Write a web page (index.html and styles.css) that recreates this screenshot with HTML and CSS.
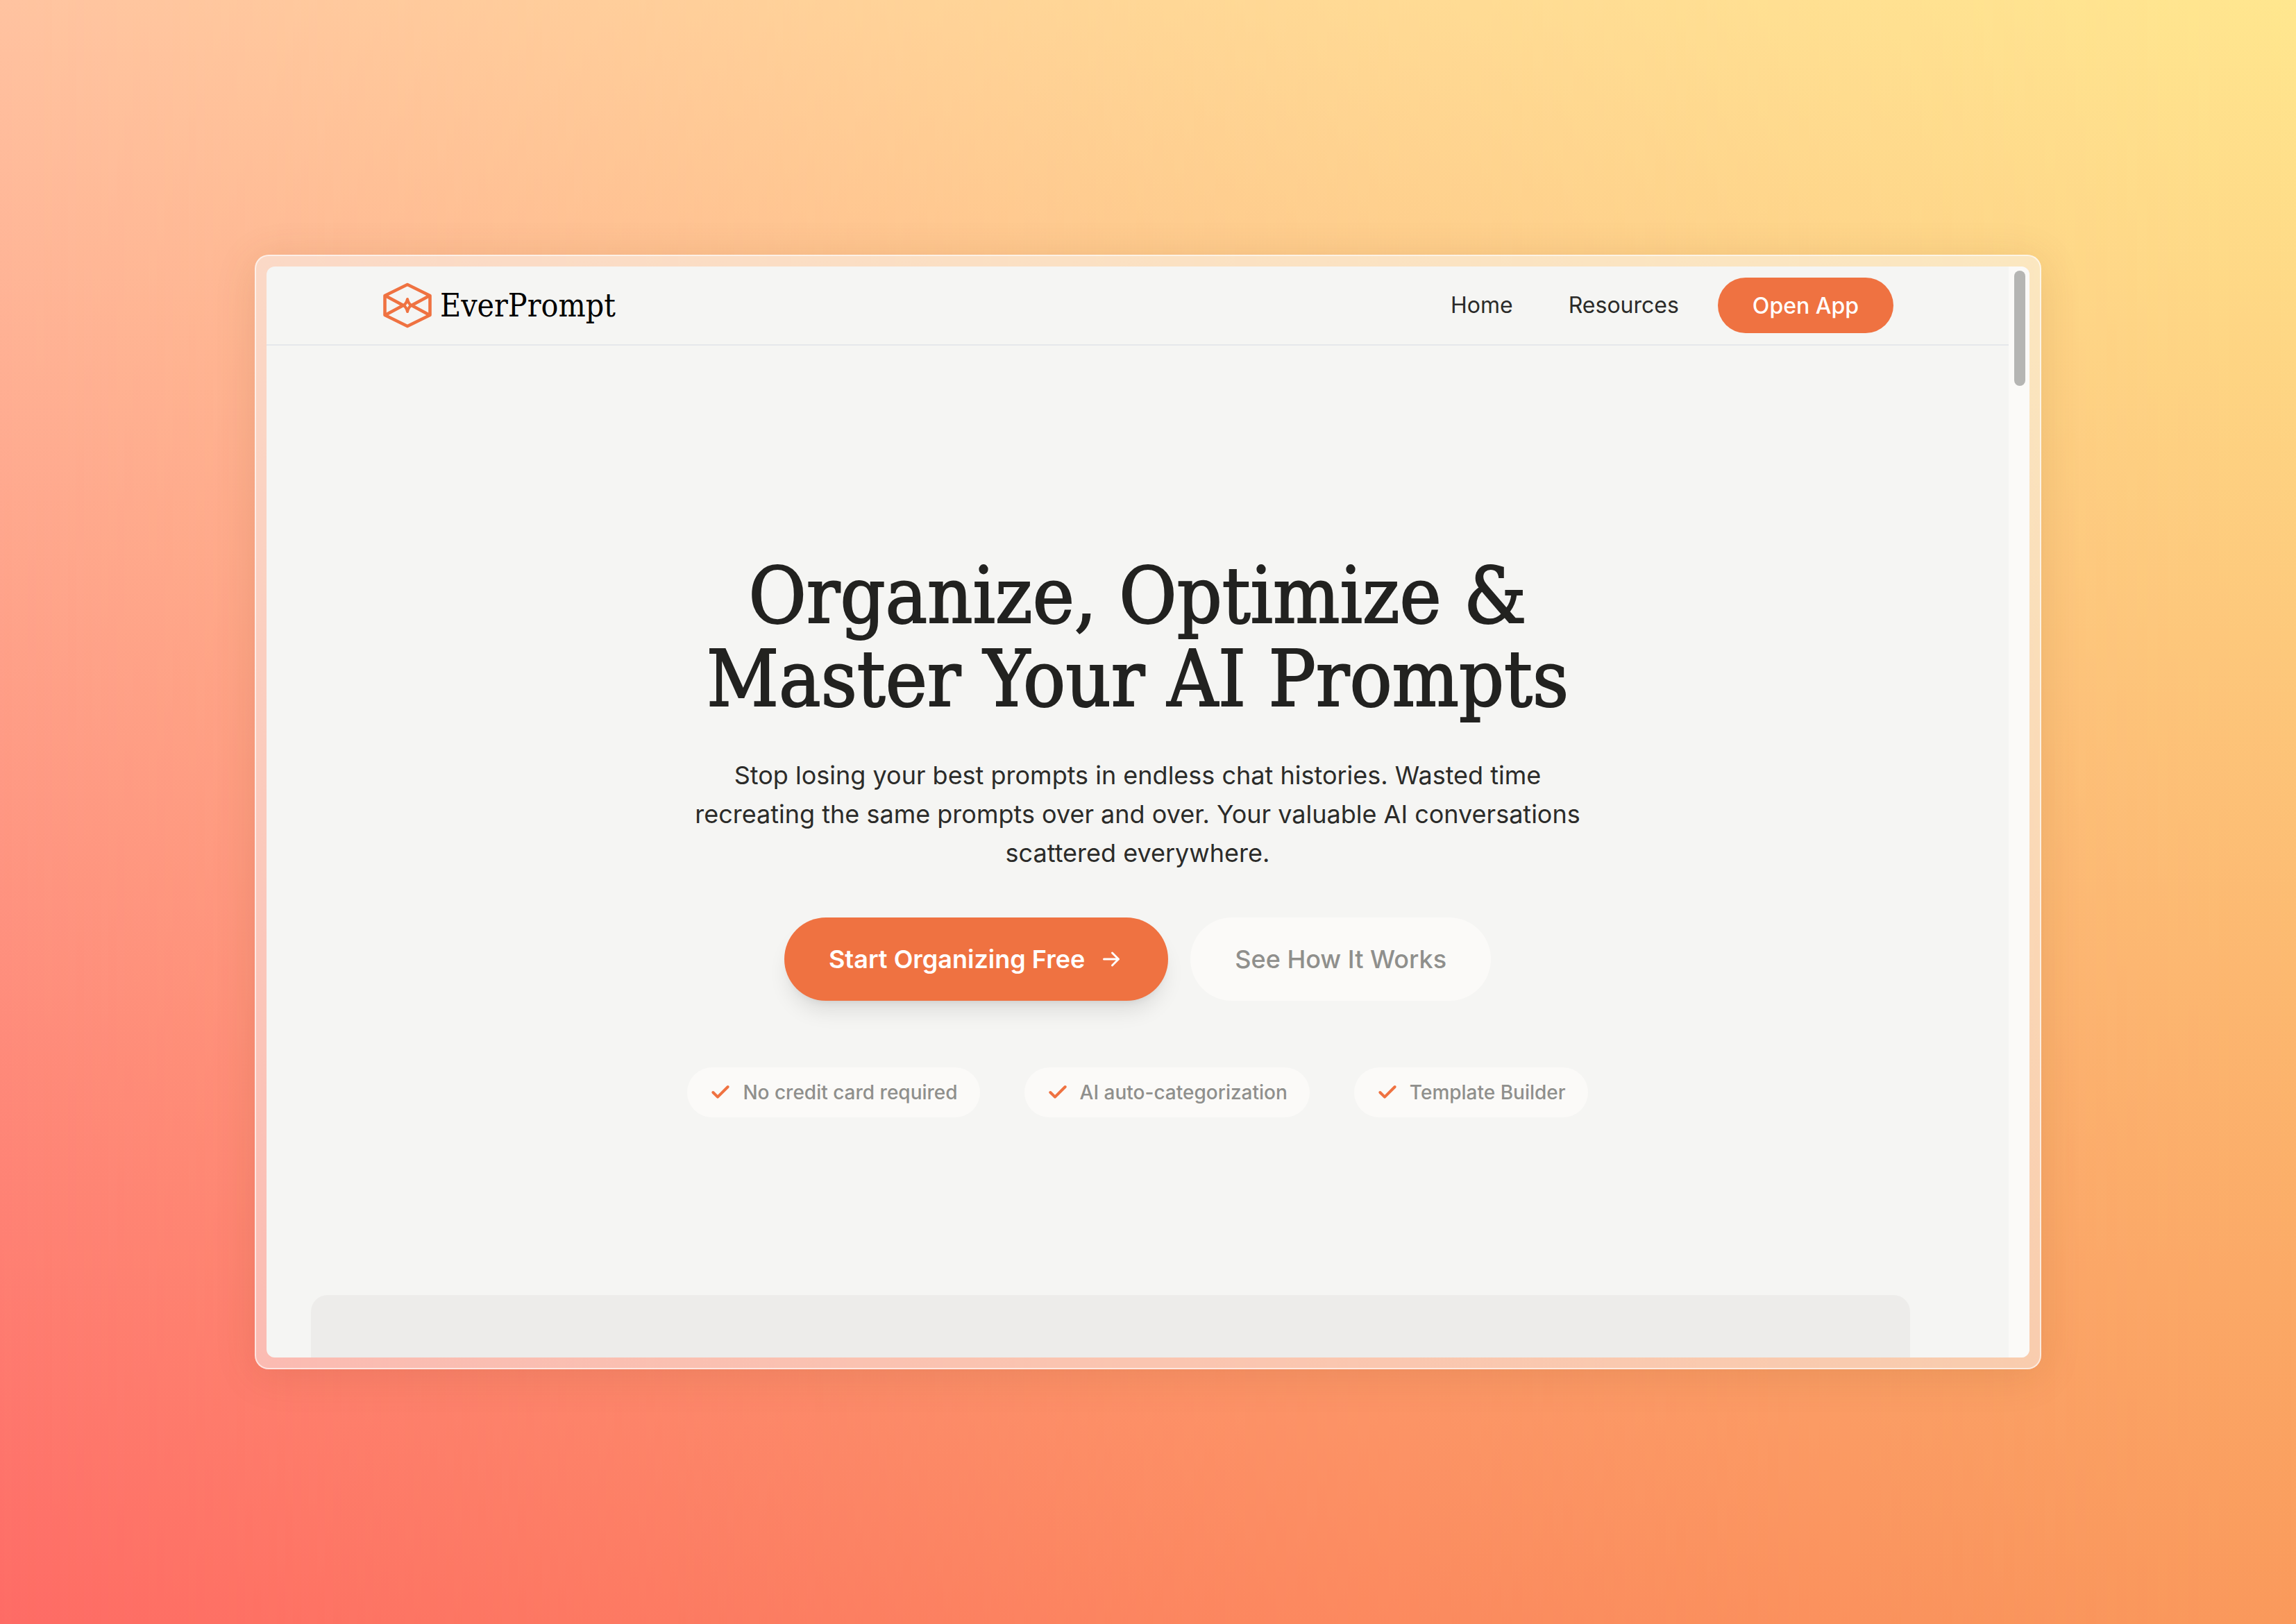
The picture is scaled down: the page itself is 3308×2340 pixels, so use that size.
FILE: index.html
```html
<!DOCTYPE html>
<html lang="en">
<head>
<meta charset="utf-8">
<meta name="viewport" content="width=device-width, initial-scale=1">
<title>EverPrompt</title>
<link rel="stylesheet" href="styles.css">
</head>
<body>
<div class="frame">
  <div class="window">
    <div class="page">
      <header class="header">
        <a class="brand" href="#">
          <svg class="brand-mark" viewBox="0 0 70 68" fill="none" stroke="currentColor" stroke-width="4.6" stroke-linejoin="round" aria-hidden="true">
            <path d="M35 4 67.5 20V48L35 64 2.500 48V20Z"/>
            <path d="M3 20 29 34 3 48M67 20 41 34 67 48"/>
            <path d="M35 25Q36.500 31.500 40.500 34Q36.500 36.500 35 43Q33.500 36.500 29.500 34Q33.500 31.500 35 25Z" stroke-width="4"/>
          </svg>
          <span class="brand-name">EverPrompt</span>
        </a>
        <nav class="nav">
          <a class="nav-link" href="#">Home</a>
          <a class="nav-link" href="#">Resources</a>
          <button class="button button-small" type="button">Open App</button>
        </nav>
      </header>
      <main class="hero">
        <h1 class="title">Organize, Optimize &amp;<br>Master Your AI Prompts</h1>
        <p class="lead">Stop losing your best prompts in endless chat histories. Wasted time recreating the same prompts over and over. Your valuable AI conversations scattered everywhere.</p>
        <div class="actions">
          <button class="button button-primary" type="button">Start Organizing Free
            <svg class="arrow" viewBox="0 0 24 24" fill="none" stroke="currentColor" stroke-width="2" stroke-linecap="round" stroke-linejoin="round" aria-hidden="true"><path d="M5 12h14M13 6l6 6-6 6"/></svg>
          </button>
          <button class="button button-quiet" type="button">See How It Works</button>
        </div>
        <ul class="perks">
          <li class="perk"><svg class="check" viewBox="0 0 24 24" aria-hidden="true"><path d="M20 6 9 17l-5-5"/></svg>No credit card required</li>
          <li class="perk"><svg class="check" viewBox="0 0 24 24" aria-hidden="true"><path d="M20 6 9 17l-5-5"/></svg>AI auto-categorization</li>
          <li class="perk"><svg class="check" viewBox="0 0 24 24" aria-hidden="true"><path d="M20 6 9 17l-5-5"/></svg>Template Builder</li>
        </ul>
      </main>
      <section class="preview" aria-label="Preview"></section>
    </div>
    <div class="scroll-track" aria-hidden="true"><div class="scroll-thumb"></div></div>
  </div>
</div>
</body>
</html>
```
FILE: styles.css
```css
* { box-sizing: border-box; }

body {
  position: relative;
  display: flex;
  min-height: 100vh;
  margin: 0;
  padding: 367px;
  background: linear-gradient(to bottom, #ffe78f, #fa9a5c);
  color: #222220;
  font-family: Inter, "Liberation Sans", sans-serif;
}

/* Left half of the backdrop, fading out towards the right edge */
body::before {
  content: "";
  position: absolute;
  inset: 0;
  background: linear-gradient(to bottom, #ffc3a0, #fe6b65);
  mask-image: linear-gradient(to right, #000, rgba(0, 0, 0, 0.44) 50%, transparent);
}

.frame {
  position: relative;
  display: flex;
  flex: 1;
  min-width: 0;
  padding: 15px;
  border: 2px solid rgba(255, 255, 255, 0.6);
  border-radius: 20px;
  background: rgba(248, 248, 248, 0.5);
  box-shadow: 0 8px 60px rgba(120, 70, 20, 0.14);
}

.window {
  display: flex;
  flex: 1;
  min-width: 0;
  overflow: hidden;
  border-radius: 12px;
  background: #f5f5f3;
}

.page {
  display: flex;
  flex: 1;
  flex-direction: column;
  min-width: 0;
}

.scroll-track {
  width: 30px;
  padding: 6px 6px 6px 8px;
  background: #fbfaf8;
}

.scroll-thumb {
  height: 166px;
  border-radius: 8px;
  background: #b5b5b3;
}

.header {
  display: flex;
  align-items: center;
  justify-content: space-between;
  height: 114px;
  padding: 0 166px 0 168px;
  border-bottom: 2px solid #e5e7eb;
}

.brand {
  display: flex;
  align-items: center;
  gap: 12px;
  color: #000;
  text-decoration: none;
}

.brand-mark {
  width: 70px;
  height: 68px;
  color: #ef7241;
}

.brand-name {
  font-family: "DejaVu Serif Condensed", "DejaVu Serif", serif;
  font-size: 46px;
  line-height: 48px;
}

.nav {
  display: flex;
  align-items: center;
}

.nav-link {
  margin-right: 80px;
  color: #2b2b29;
  font-size: 32px;
  line-height: 48px;
  text-decoration: none;
}

.nav-link:nth-child(2) { margin-right: 56px; }

.button {
  display: flex;
  align-items: center;
  justify-content: center;
  border: 0;
  border-radius: 60px;
  background: #ef7241;
  color: #fff;
  font: inherit;
  font-weight: 500;
}

.button-small {
  height: 80px;
  padding: 0 50px;
  font-size: 32px;
}

.button-primary,
.button-quiet {
  height: 120px;
  padding: 0 64px;
  font-size: 36px;
}

.button-primary {
  gap: 20px;
  font-weight: 600;
  box-shadow: 0 20px 30px -6px rgba(0, 0, 0, 0.1), 0 8px 12px -8px rgba(0, 0, 0, 0.1);
}

.button-quiet {
  background: #fbfaf8;
  color: #8f8f8c;
}

.arrow {
  width: 36px;
  height: 36px;
}

.hero {
  display: flex;
  flex-direction: column;
  align-items: center;
  padding: 300px 64px 256px;
}

.title {
  margin: 0;
  font-family: "DejaVu Serif Condensed", "DejaVu Serif", serif;
  font-size: 113px;
  font-weight: 400;
  line-height: 120px;
  text-align: center;
  white-space: nowrap;
  -webkit-text-stroke: 2px currentColor;
}

.lead {
  max-width: 1344px;
  margin: 51px 0 65px;
  color: #2b2b29;
  font-size: 36px;
  line-height: 56px;
  text-align: center;
}

.actions {
  display: flex;
  gap: 32px;
}

.perks {
  display: flex;
  gap: 64px;
  margin: 96px 0 0;
  padding: 0;
  list-style: none;
}

.perk {
  display: flex;
  align-items: center;
  gap: 16px;
  height: 72px;
  padding: 0 32px;
  border-radius: 36px;
  background: #fbfaf8;
  color: #8f8f8c;
  font-size: 28px;
  font-weight: 500;
}

.check {
  width: 32px;
  height: 32px;
  fill: none;
  stroke: #ef7241;
  stroke-width: 3;
  stroke-linecap: round;
  stroke-linejoin: round;
}

.preview {
  flex: 1;
  margin: 0 142px 0 64px;
  border-radius: 24px 24px 0 0;
  background: #edecea;
}
```
